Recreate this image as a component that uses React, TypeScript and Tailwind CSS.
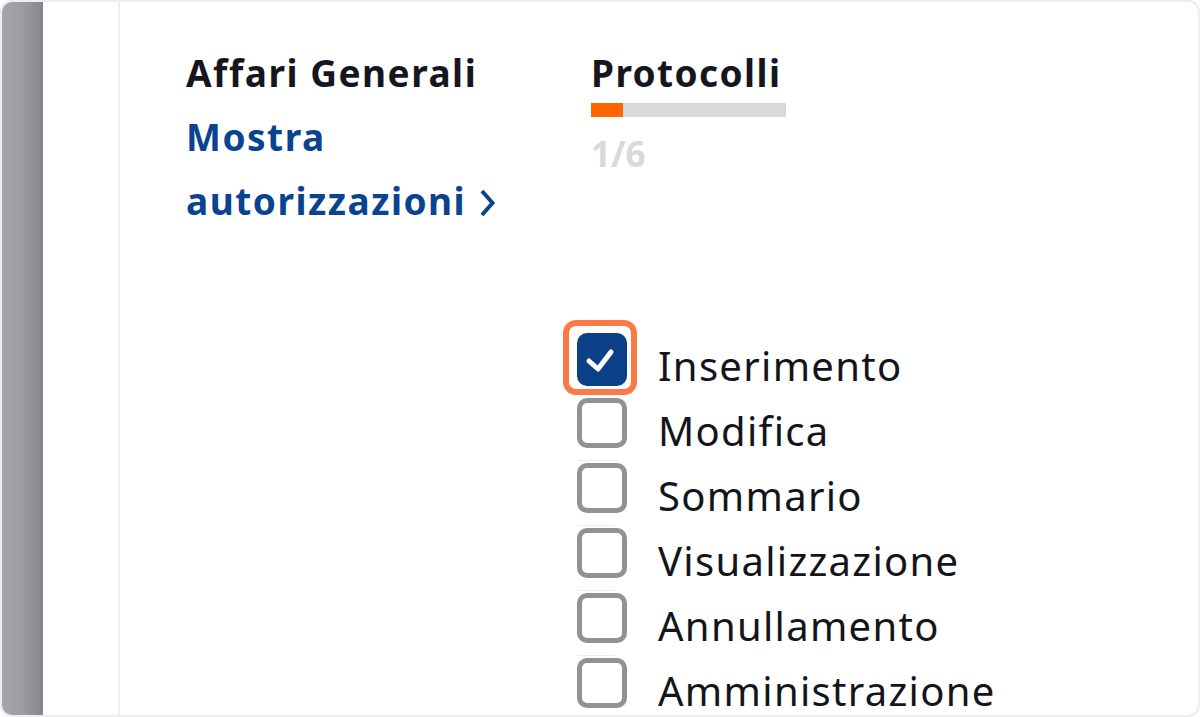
export default function App() {
  const items = [
    "Inserimento",
    "Modifica",
    "Sommario",
    "Visualizzazione",
    "Annullamento",
    "Amministrazione",
  ];
  return (
    <div className="w-[1200px] h-[717px] bg-white font-['Noto_Sans',sans-serif]">
      <div className="h-full border-2 border-[#ededf2] rounded-[12px] overflow-hidden flex">
        <div className="w-[41px] shrink-0 bg-linear-to-r from-[#a6a6aa] via-[#9d9da1] to-[#86868a]" />
        <div className="w-[77px] shrink-0 border-r-2 border-[#efeff4]" />
        <div className="flex-1 pl-[66px] pt-[39px]">
          <div className="flex items-start">
            <div className="w-[405px] shrink-0 text-[37px] font-bold leading-[64px] tracking-[1.5px]">
              <div className="text-[#16161e]">Affari Generali</div>
              <a className="block text-[#0a4390] cursor-pointer">
                Mostra
                <br />
                autorizzazioni{" "}
                <svg
                  className="inline-block align-baseline -mb-[3px] ml-[2px]"
                  width="17"
                  height="30"
                  viewBox="0 0 17 30"
                  fill="none"
                >
                  <path
                    d="M3 3 L13.5 15 L3 27"
                    stroke="#0a4390"
                    strokeWidth="4"
                    strokeLinecap="butt"
                    strokeLinejoin="miter"
                  />
                </svg>
              </a>
            </div>
            <div className="pt-[8px]">
              <div className="text-[37px] font-bold leading-[48px] tracking-[1.4px] text-[#16161e]">
                Protocolli
              </div>
              <div className="mt-[6px] w-[195px] h-[14px] bg-[#d9d9d9] flex">
                <div className="w-1/6 h-full bg-[#ff6600]" />
              </div>
              <div className="mt-[17px] text-[35px] font-bold leading-[40px] text-[#d9d9d9]">
                1/6
              </div>
            </div>
          </div>
          <div className="mt-[100px] ml-[391px] flex flex-col">
            {items.map((label, i) => (
              <div key={label} className="flex items-start h-[65px]">
                <div className="flex flex-col shrink-0">
                  {i >= 2 ? (
                    <div className="w-[38px] h-px bg-[#ececee] -mt-[3px] mb-[2px]" />
                  ) : null}
                  {i === 0 ? (
                    <div className="relative w-[50px] h-[53px] rounded-[10px] bg-[#0b3f87] flex items-center justify-center">
                      <div className="absolute -left-[14px] -top-[13px] w-[74px] h-[75px] border-[6px] border-[#fc7a48] rounded-[13px]" />
                      <svg width="50" height="53" viewBox="0 0 50 53" fill="none">
                        <path
                          d="M12 28 L21 36 L34 19"
                          stroke="white"
                          strokeWidth="5"
                          strokeLinecap="round"
                          strokeLinejoin="round"
                        />
                      </svg>
                    </div>
                  ) : (
                    <div className="w-[50px] h-[50px] rounded-[10px] border-[5px] border-[#919196] bg-white" />
                  )}
                </div>
                <div className="ml-[31px] text-[40px] leading-[65px] tracking-[1.3px] text-[#14141b]">
                  {label}
                </div>
              </div>
            ))}
          </div>
        </div>
      </div>
    </div>
  );
}
